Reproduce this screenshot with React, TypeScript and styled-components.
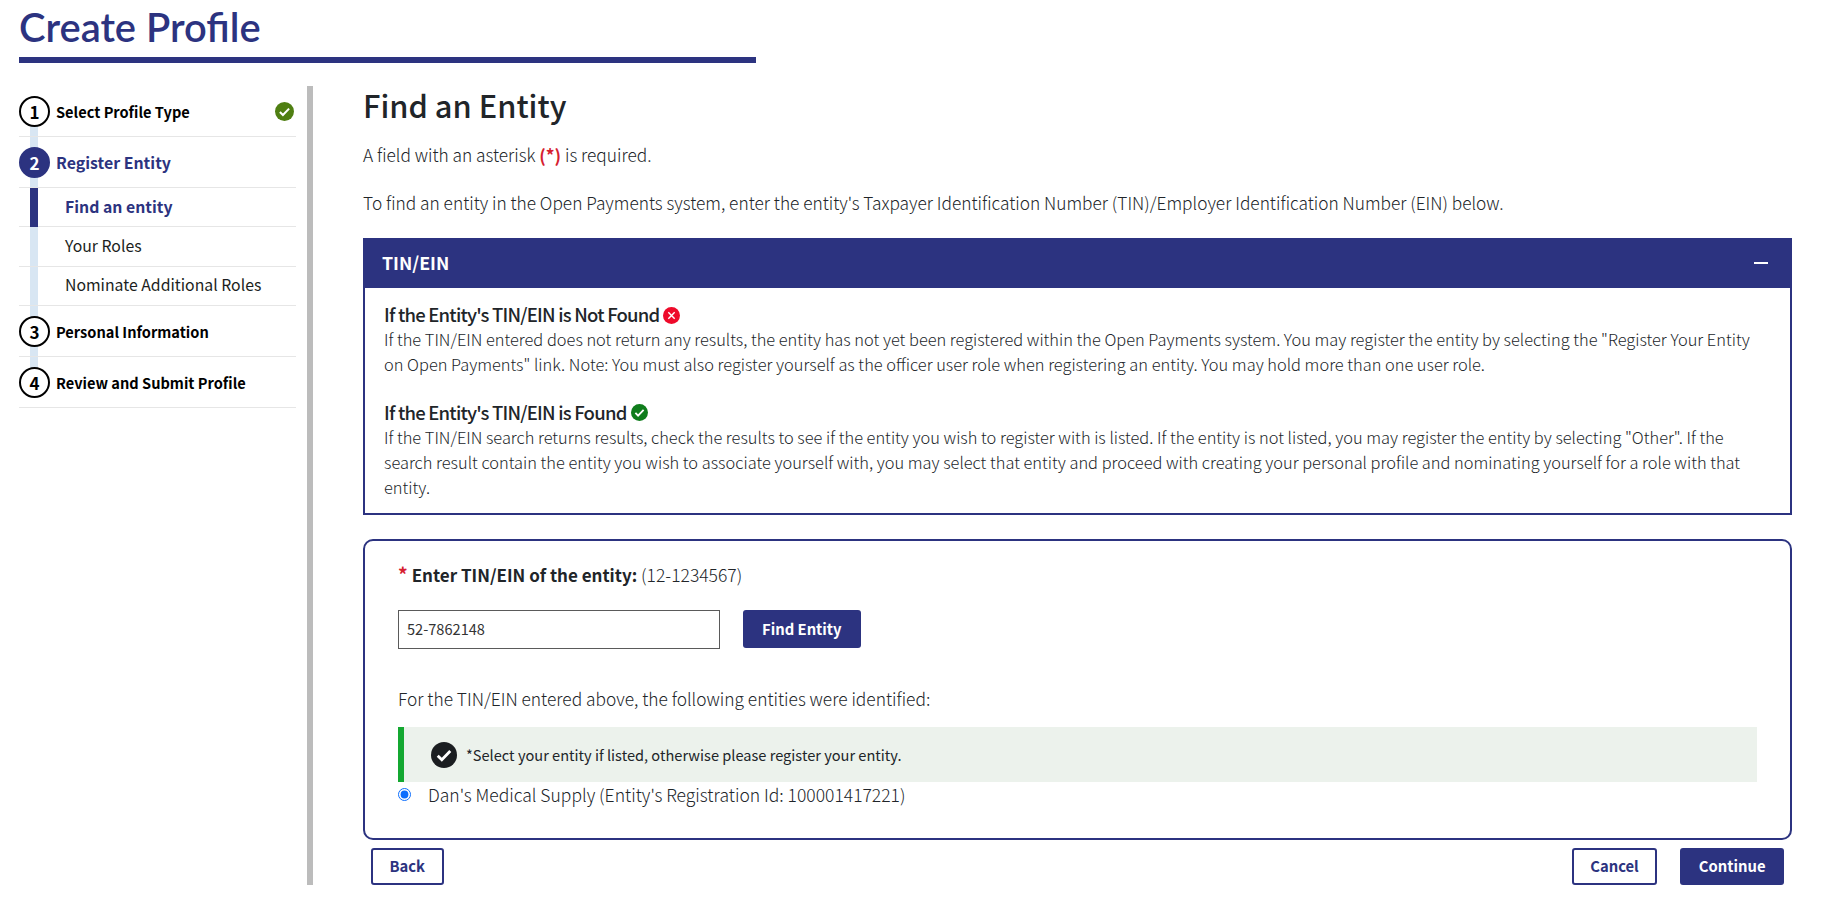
import styled, { createGlobalStyle } from 'styled-components';

const NAVY = '#2c3380';
const SOURCE = '"Noto Sans CJK SC", "Noto Sans", sans-serif';

const GlobalStyle = createGlobalStyle`
  html, body {
    margin: 0;
    background: #fff;
    overflow: hidden;
  }
  body {
    font-family: ${SOURCE};
    color: #1b1e21;
  }
  * {
    box-sizing: border-box;
  }
`;

const Page = styled.div`
  width: 1835px;
  height: 899px;
  padding: 0 43px 0 19px;
`;

const PageTitle = styled.h1`
  width: 737px;
  height: 63px;
  margin: 0 0 23px;
  border-bottom: 6px solid ${NAVY};
  font-family: 'Lato', sans-serif;
  font-size: 39.9px;
  line-height: 54px;
  font-weight: 600;
  color: ${NAVY};
`;

const Columns = styled.div`
  display: flex;
  height: 799px;
`;

const Sidebar = styled.nav`
  width: 294px;
  flex: none;
  border-right: 6px solid #bcbcbc;
`;

const StepList = styled.div`
  position: relative;
  width: 277px;

  &::before {
    content: '';
    position: absolute;
    left: 11px;
    top: 27px;
    width: 8px;
    height: 271px;
    background: #d8e6f3;
  }
`;

const StepRow = styled.div`
  position: relative;
  height: 51px;
  display: flex;
  align-items: center;
  gap: 6px;
  border-bottom: 1.5px solid #e6e6e6;
`;

const StepNumber = styled.span<{ $active?: boolean }>`
  width: 31px;
  height: 31px;
  flex: none;
  display: flex;
  align-items: center;
  justify-content: center;
  border-radius: 50%;
  border: 2px solid ${(p) => (p.$active ? NAVY : '#000')};
  background: ${(p) => (p.$active ? NAVY : '#fff')};
  color: ${(p) => (p.$active ? '#fff' : '#000')};
  font-size: 17px;
  font-weight: 700;
`;

const StepLabel = styled.span<{ $active?: boolean }>`
  flex: 1;
  font-size: ${(p) => (p.$active ? '15.9px' : '14.6px')};
  font-weight: 700;
  color: ${(p) => (p.$active ? NAVY : '#000')};
`;

const StepCheck = styled.span`
  display: flex;
  margin-right: 2px;
`;

const SubRow = styled.div<{ $active?: boolean }>`
  position: relative;
  height: ${(p) => (p.$active ? '39px' : '39.5px')};
  display: flex;
  align-items: center;
  padding: 0 0 2px 46px;
  border-bottom: 1.5px solid #e6e6e6;
  font-size: 15.8px;
  font-weight: ${(p) => (p.$active ? 700 : 400)};
  color: ${(p) => (p.$active ? NAVY : '#1b1e21')};

  &::before {
    content: ${(p) => (p.$active ? "''" : 'none')};
    position: absolute;
    left: 11px;
    top: 0;
    bottom: -1px;
    width: 8px;
    background: ${NAVY};
  }
`;

const Main = styled.main`
  flex: 1;
  padding-left: 50px;
  display: flex;
  flex-direction: column;
`;

const Heading = styled.h2`
  margin: 0;
  font-size: 30.8px;
  line-height: 38px;
  font-weight: 500;
  color: #212529;
`;

const Intro = styled.p<{ $gap: number }>`
  margin: ${(p) => p.$gap}px 0 0;
  font-size: 17.3px;
  line-height: 24px;
  font-weight: 300;
  color: #212529;
`;

const Required = styled.span`
  color: #d6202f;
  font-weight: 700;
`;

const Panel = styled.section`
  margin-top: 23px;
  border: 2px solid ${NAVY};
  border-top: 0;
`;

const PanelHeader = styled.div`
  height: 50px;
  margin: 0 -2px;
  padding: 0 19px 3px;
  display: flex;
  align-items: center;
  justify-content: space-between;
  background: ${NAVY};
  color: #fff;
  font-size: 17.8px;
  font-weight: 700;
`;

const Minus = styled.span`
  width: 14px;
  height: 2px;
  margin: 3px 5px 0 0;
  background: #fff;
`;

const PanelBody = styled.div`
  padding: 14px 19px 0;
  height: 225px;
`;

const InfoTitle = styled.h3`
  margin: 0 0 1px;
  height: 24px;
  display: flex;
  align-items: center;
  gap: 4px;
  font-size: 18.5px;
  line-height: 24px;
  font-weight: 500;
  letter-spacing: -0.78px;
  color: #212529;
`;

const InfoText = styled.p`
  margin: 0 0 23px;
  font-size: 16.4px;
  line-height: 25px;
  font-weight: 300;
  color: #212529;
`;

const Card = styled.section`
  margin-top: 24px;
  height: 302px;
  padding: 21px 33px 0;
  border: 2px solid ${NAVY};
  border-radius: 10px;
`;

const FieldLabel = styled.div`
  font-size: 17.5px;
  line-height: 26px;
  font-weight: 300;
  color: #212529;

  b {
    font-size: 17px;
    font-weight: 700;
  }
`;

const Asterisk = styled.span`
  color: #d6202f;
  margin-right: 4px;
  font-size: 19px;
  line-height: 0;
  font-weight: 700;
`;

const SearchRow = styled.div`
  margin-top: 22px;
  display: flex;
  gap: 23px;
`;

const TinInput = styled.input`
  width: 322px;
  height: 39px;
  padding: 0 8px 2px;
  border: 1px solid #5a5a5a;
  font-family: ${SOURCE};
  font-size: 14.6px;
  color: #333;
`;

const SolidButton = styled.button`
  height: 38px;
  padding: 0 19px 2px;
  border: 0;
  border-radius: 3px;
  background: ${NAVY};
  color: #fff;
  font-family: ${SOURCE};
  font-size: 14.8px;
  font-weight: 700;
`;

const ContinueButton = styled(SolidButton)`
  height: 37px;
  padding: 0 18.5px 2px;
`;

const OutlineButton = styled(SolidButton)`
  height: 37px;
  padding: 0 16.5px 2px;
  border: 2px solid ${NAVY};
  background: #fff;
  color: ${NAVY};
`;

const ResultsNote = styled.p`
  margin: 37px 0 0;
  font-size: 17.35px;
  line-height: 26px;
  font-weight: 300;
  color: #212529;
`;

const Alert = styled.div`
  margin-top: 15px;
  height: 55px;
  padding-left: 27px;
  display: flex;
  align-items: center;
  gap: 9px;
  border-left: 6px solid #14a831;
  background: #ecf2ec;
  font-size: 14.6px;
  font-weight: 400;
  color: #212529;
`;

const RadioRow = styled.label`
  height: 24px;
  display: flex;
  align-items: center;
  gap: 17px;
  font-size: 17.5px;
  font-weight: 300;
  color: #212529;

  input {
    width: 13px;
    height: 13px;
    margin: 0;
    accent-color: #0d6efd;
  }
`;

const Footer = styled.div`
  margin-top: 8px;
  padding: 0 8px;
  display: flex;
  align-items: center;
  gap: 23px;
`;

const Spacer = styled.div`
  flex: 1;
`;

const CheckBadge = ({ size, fill }: { size: number; fill: string }) => (
  <svg width={size} height={size} viewBox="0 0 24 24" style={{ flex: 'none' }}>
    <circle cx="12" cy="12" r="12" fill={fill} />
    <path d="M6.2 12.6l3.8 3.8 7.8-8" fill="none" stroke="#fff" strokeWidth="2.6" />
  </svg>
);

const CrossBadge = () => (
  <svg width="17" height="17" viewBox="0 0 24 24" style={{ flex: 'none', marginTop: 3 }}>
    <circle cx="12" cy="12" r="12" fill="#ee0a2a" />
    <path d="M7.5 7.5l9 9M16.5 7.5l-9 9" fill="none" stroke="#fff" strokeWidth="2" />
  </svg>
);

export default function App() {
  return (
    <Page>
      <GlobalStyle />
      <PageTitle>Create Profile</PageTitle>
      <Columns>
        <Sidebar>
          <StepList>
            <StepRow>
              <StepNumber>1</StepNumber>
              <StepLabel>Select Profile Type</StepLabel>
              <StepCheck>
                <CheckBadge size={19} fill="#4f7f12" />
              </StepCheck>
            </StepRow>
            <StepRow>
              <StepNumber $active>2</StepNumber>
              <StepLabel $active>Register Entity</StepLabel>
            </StepRow>
            <SubRow $active>Find an entity</SubRow>
            <SubRow>Your Roles</SubRow>
            <SubRow>Nominate Additional Roles</SubRow>
            <StepRow>
              <StepNumber>3</StepNumber>
              <StepLabel>Personal Information</StepLabel>
            </StepRow>
            <StepRow>
              <StepNumber>4</StepNumber>
              <StepLabel>Review and Submit Profile</StepLabel>
            </StepRow>
          </StepList>
        </Sidebar>
        <Main>
          <Heading>Find an Entity</Heading>
          <Intro $gap={19}>
            A field with an asterisk <Required>(*)</Required> is required.
          </Intro>
          <Intro $gap={24}>
            To find an entity in the Open Payments system, enter the entity's Taxpayer Identification Number (TIN)/Employer Identification Number (EIN) below.
          </Intro>
          <Panel>
            <PanelHeader>
              TIN/EIN
              <Minus />
            </PanelHeader>
            <PanelBody>
              <InfoTitle>
                If the Entity's TIN/EIN is Not Found <CrossBadge />
              </InfoTitle>
              <InfoText>
                If the TIN/EIN entered does not return any results, the entity has not yet been registered within the Open Payments system. You may register the entity by selecting the "Register Your Entity on Open Payments" link. Note: You must also register yourself as the officer user role when registering an entity. You may hold more than one user role.
              </InfoText>
              <InfoTitle>
                If the Entity's TIN/EIN is Found <CheckBadge size={17} fill="#0f7d1c" />
              </InfoTitle>
              <InfoText>
                If the TIN/EIN search returns results, check the results to see if the entity you wish to register with is listed. If the entity is not listed, you may register the entity by selecting "Other". If the search result contain the entity you wish to associate yourself with, you may select that entity and proceed with creating your personal profile and nominating yourself for a role with that entity.
              </InfoText>
            </PanelBody>
          </Panel>
          <Card>
            <FieldLabel>
              <Asterisk>*</Asterisk>
              <b>Enter TIN/EIN of the entity:</b> (12-1234567)
            </FieldLabel>
            <SearchRow>
              <TinInput defaultValue="52-7862148" />
              <SolidButton>Find Entity</SolidButton>
            </SearchRow>
            <ResultsNote>For the TIN/EIN entered above, the following entities were identified:</ResultsNote>
            <Alert>
              <CheckBadge size={26} fill="#1b1e21" />
              *Select your entity if listed, otherwise please register your entity.
            </Alert>
            <RadioRow>
              <input type="radio" name="entity" defaultChecked />
              Dan's Medical Supply (Entity's Registration Id: 100001417221)
            </RadioRow>
          </Card>
          <Footer>
            <OutlineButton>Back</OutlineButton>
            <Spacer />
            <OutlineButton>Cancel</OutlineButton>
            <ContinueButton>Continue</ContinueButton>
          </Footer>
        </Main>
      </Columns>
    </Page>
  );
}
